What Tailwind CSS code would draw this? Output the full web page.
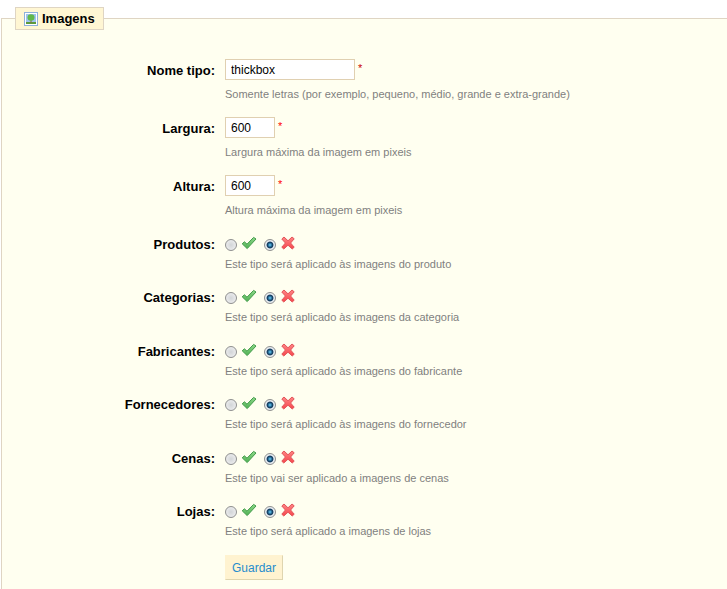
<!DOCTYPE html>
<html lang="pt">
<head>
  <meta charset="UTF-8" />
  <meta name="viewport" content="width=device-width, initial-scale=1.0" />
  <title>Imagens</title>
  <script src="https://cdn.jsdelivr.net/npm/@tailwindcss/browser@4"></script>
</head>
<body class="min-h-screen flex flex-col bg-white pt-[7px] pl-px text-black font-['Liberation_Sans',Arial,sans-serif]">

<svg class="absolute size-0" aria-hidden="true">
  <defs>
    <linearGradient id="green" x1="0" y1="0" x2="0" y2="1">
      <stop offset="0" stop-color="#8ed88a" />
      <stop offset="1" stop-color="#4fb052" />
    </linearGradient>
    <linearGradient id="red" x1="0" y1="0" x2="0" y2="1">
      <stop offset="0" stop-color="#ff8585" />
      <stop offset="1" stop-color="#f5474d" />
    </linearGradient>
  </defs>
  <symbol id="yes" viewBox="0 0 16 16">
    <path d="M1.2 8.8 3.4 6.8 6 9.2 12.6 2.4 15 4 6.2 13.6Z" fill="url(#green)" stroke="#3f9a48" stroke-linejoin="round" />
  </symbol>
  <symbol id="no" viewBox="0 0 16 16">
    <path d="M4 2 8 5.8 12 2 14.2 3.8 10.6 8 14.2 12.2 12.2 14 8 10.2 3.8 14 1.8 12.2 5.4 8 1.8 4Z" fill="url(#red)" stroke="#e2555a" stroke-linejoin="round" />
  </symbol>
</svg>

<form class="grow flex flex-col">
  <fieldset class="grow border border-r-0 border-b-0 border-[#dfd5c3] bg-[#fffff0] px-[13px]">
    <legend class="border border-[#dfd5c3] bg-[#fff6d3] px-[7px]">
      <span class="flex items-center gap-[3px] h-[21px] pr-px text-[13px] font-bold">
        <svg class="size-4" viewBox="0 0 16 16">
          <rect x="1.5" y="1.5" width="13" height="13" fill="#fff" stroke="#8fb0dc" />
          <rect x="3" y="3" width="10" height="10" fill="#9fc3ee" />
          <rect x="3" y="11" width="10" height="2" fill="#5c9a3c" />
          <path d="M7.5 8h1v4h-1z" fill="#8a6a3a" />
          <ellipse cx="8" cy="6.5" rx="3.5" ry="3.2" fill="#62b84a" />
        </svg>
        Imagens
      </span>
    </legend>

    <div class="pt-[29px]">
      <div class="flex gap-[10px] h-[58px]">
        <label for="name" class="w-[200px] text-right text-[13px] leading-6 font-bold">Nome tipo:</label>
        <div>
          <div class="flex gap-[3px]">
            <input id="name" type="text" value="thickbox" class="w-[130px] h-[21px] border border-[#e0d0b1] bg-white px-[5px] text-[12px]" />
            <sup class="top-0 text-[11px] leading-[18px] text-[#c00]">*</sup>
          </div>
          <p class="mt-[6px] text-[11px] leading-4 text-[#7f7f7f]">Somente letras (por exemplo, pequeno, médio, grande e extra-grande)</p>
        </div>
      </div>
      <div class="flex gap-[10px] h-[58px]">
        <label for="width" class="w-[200px] text-right text-[13px] leading-6 font-bold">Largura:</label>
        <div>
          <div class="flex gap-[3px]">
            <input id="width" type="text" value="600" class="w-[50px] h-[21px] border border-[#e0d0b1] bg-white px-[5px] text-[12px]" />
            <sup class="top-0 text-[11px] leading-[18px] text-[#f00]">*</sup>
          </div>
          <p class="mt-[6px] text-[11px] leading-4 text-[#7f7f7f]">Largura máxima da imagem em pixeis</p>
        </div>
      </div>
      <div class="flex gap-[10px] h-[58px]">
        <label for="height" class="w-[200px] text-right text-[13px] leading-6 font-bold">Altura:</label>
        <div>
          <div class="flex gap-[3px]">
            <input id="height" type="text" value="600" class="w-[50px] h-[21px] border border-[#e0d0b1] bg-white px-[5px] text-[12px]" />
            <sup class="top-0 text-[11px] leading-[18px] text-[#f00]">*</sup>
          </div>
          <p class="mt-[6px] text-[11px] leading-4 text-[#7f7f7f]">Altura máxima da imagem em pixeis</p>
        </div>
      </div>
    </div>

    <div id="flags">
      <div role="radiogroup" aria-labelledby="products" class="flex gap-[10px] h-[53px] even:h-[54px]">
        <span id="products" class="w-[200px] text-right text-[13px] leading-6 font-bold">Produtos:</span>
        <div>
          <div class="flex items-center h-[19px]">
            <input id="products_on" type="radio" name="products" class="appearance-none size-3 mt-1 rounded-full border border-[#8e8f8f] bg-radial from-[#d2d5d8] to-[#f4f4f4]" />
            <label for="products_on" aria-label="Sim" class="ml-1"><svg class="size-4"><use href="#yes" /></svg></label>
            <input id="products_off" type="radio" name="products" checked class="appearance-none size-3 ml-[7px] mt-1 rounded-full border border-[#8e8f8f] bg-radial from-[#5cc0ee] from-5% via-[#0b3558] via-40% to-[#e8eef2] to-55%" />
            <label for="products_off" aria-label="Não" class="ml-1"><svg class="size-4"><use href="#no" /></svg></label>
          </div>
          <p class="mt-1 text-[11px] leading-4 text-[#7f7f7f]">Este tipo será aplicado às imagens do produto</p>
        </div>
      </div>
      <div role="radiogroup" aria-labelledby="categories" class="flex gap-[10px] h-[53px] even:h-[54px]">
        <span id="categories" class="w-[200px] text-right text-[13px] leading-6 font-bold">Categorias:</span>
        <div>
          <div class="flex items-center h-[19px]">
            <input id="categories_on" type="radio" name="categories" class="appearance-none size-3 mt-1 rounded-full border border-[#8e8f8f] bg-radial from-[#d2d5d8] to-[#f4f4f4]" />
            <label for="categories_on" aria-label="Sim" class="ml-1"><svg class="size-4"><use href="#yes" /></svg></label>
            <input id="categories_off" type="radio" name="categories" checked class="appearance-none size-3 ml-[7px] mt-1 rounded-full border border-[#8e8f8f] bg-radial from-[#5cc0ee] from-5% via-[#0b3558] via-40% to-[#e8eef2] to-55%" />
            <label for="categories_off" aria-label="Não" class="ml-1"><svg class="size-4"><use href="#no" /></svg></label>
          </div>
          <p class="mt-1 text-[11px] leading-4 text-[#7f7f7f]">Este tipo será aplicado às imagens da categoria</p>
        </div>
      </div>
      <div role="radiogroup" aria-labelledby="manufacturers" class="flex gap-[10px] h-[53px] even:h-[54px]">
        <span id="manufacturers" class="w-[200px] text-right text-[13px] leading-6 font-bold">Fabricantes:</span>
        <div>
          <div class="flex items-center h-[19px]">
            <input id="manufacturers_on" type="radio" name="manufacturers" class="appearance-none size-3 mt-1 rounded-full border border-[#8e8f8f] bg-radial from-[#d2d5d8] to-[#f4f4f4]" />
            <label for="manufacturers_on" aria-label="Sim" class="ml-1"><svg class="size-4"><use href="#yes" /></svg></label>
            <input id="manufacturers_off" type="radio" name="manufacturers" checked class="appearance-none size-3 ml-[7px] mt-1 rounded-full border border-[#8e8f8f] bg-radial from-[#5cc0ee] from-5% via-[#0b3558] via-40% to-[#e8eef2] to-55%" />
            <label for="manufacturers_off" aria-label="Não" class="ml-1"><svg class="size-4"><use href="#no" /></svg></label>
          </div>
          <p class="mt-1 text-[11px] leading-4 text-[#7f7f7f]">Este tipo será aplicado às imagens do fabricante</p>
        </div>
      </div>
      <div role="radiogroup" aria-labelledby="suppliers" class="flex gap-[10px] h-[53px] even:h-[54px]">
        <span id="suppliers" class="w-[200px] text-right text-[13px] leading-6 font-bold">Fornecedores:</span>
        <div>
          <div class="flex items-center h-[19px]">
            <input id="suppliers_on" type="radio" name="suppliers" class="appearance-none size-3 mt-1 rounded-full border border-[#8e8f8f] bg-radial from-[#d2d5d8] to-[#f4f4f4]" />
            <label for="suppliers_on" aria-label="Sim" class="ml-1"><svg class="size-4"><use href="#yes" /></svg></label>
            <input id="suppliers_off" type="radio" name="suppliers" checked class="appearance-none size-3 ml-[7px] mt-1 rounded-full border border-[#8e8f8f] bg-radial from-[#5cc0ee] from-5% via-[#0b3558] via-40% to-[#e8eef2] to-55%" />
            <label for="suppliers_off" aria-label="Não" class="ml-1"><svg class="size-4"><use href="#no" /></svg></label>
          </div>
          <p class="mt-1 text-[11px] leading-4 text-[#7f7f7f]">Este tipo será aplicado às imagens do fornecedor</p>
        </div>
      </div>
      <div role="radiogroup" aria-labelledby="scenes" class="flex gap-[10px] h-[53px] even:h-[54px]">
        <span id="scenes" class="w-[200px] text-right text-[13px] leading-6 font-bold">Cenas:</span>
        <div>
          <div class="flex items-center h-[19px]">
            <input id="scenes_on" type="radio" name="scenes" class="appearance-none size-3 mt-1 rounded-full border border-[#8e8f8f] bg-radial from-[#d2d5d8] to-[#f4f4f4]" />
            <label for="scenes_on" aria-label="Sim" class="ml-1"><svg class="size-4"><use href="#yes" /></svg></label>
            <input id="scenes_off" type="radio" name="scenes" checked class="appearance-none size-3 ml-[7px] mt-1 rounded-full border border-[#8e8f8f] bg-radial from-[#5cc0ee] from-5% via-[#0b3558] via-40% to-[#e8eef2] to-55%" />
            <label for="scenes_off" aria-label="Não" class="ml-1"><svg class="size-4"><use href="#no" /></svg></label>
          </div>
          <p class="mt-1 text-[11px] leading-4 text-[#7f7f7f]">Este tipo vai ser aplicado a imagens de cenas</p>
        </div>
      </div>
      <div role="radiogroup" aria-labelledby="stores" class="flex gap-[10px] h-[53px] even:h-[54px]">
        <span id="stores" class="w-[200px] text-right text-[13px] leading-6 font-bold">Lojas:</span>
        <div>
          <div class="flex items-center h-[19px]">
            <input id="stores_on" type="radio" name="stores" class="appearance-none size-3 mt-1 rounded-full border border-[#8e8f8f] bg-radial from-[#d2d5d8] to-[#f4f4f4]" />
            <label for="stores_on" aria-label="Sim" class="ml-1"><svg class="size-4"><use href="#yes" /></svg></label>
            <input id="stores_off" type="radio" name="stores" checked class="appearance-none size-3 ml-[7px] mt-1 rounded-full border border-[#8e8f8f] bg-radial from-[#5cc0ee] from-5% via-[#0b3558] via-40% to-[#e8eef2] to-55%" />
            <label for="stores_off" aria-label="Não" class="ml-1"><svg class="size-4"><use href="#no" /></svg></label>
          </div>
          <p class="mt-1 text-[11px] leading-4 text-[#7f7f7f]">Este tipo será aplicado a imagens de lojas</p>
        </div>
      </div>
    </div>

    <button type="submit" class="ml-[210px] mt-px h-[25px] px-[6px] border border-[#fff3d0] border-r-[#dfd5af] border-b-[#dfd5af] bg-[#fff3d0] text-[12px] text-[#268ccd]">Guardar</button>
  </fieldset>
</form>

</body>
</html>
